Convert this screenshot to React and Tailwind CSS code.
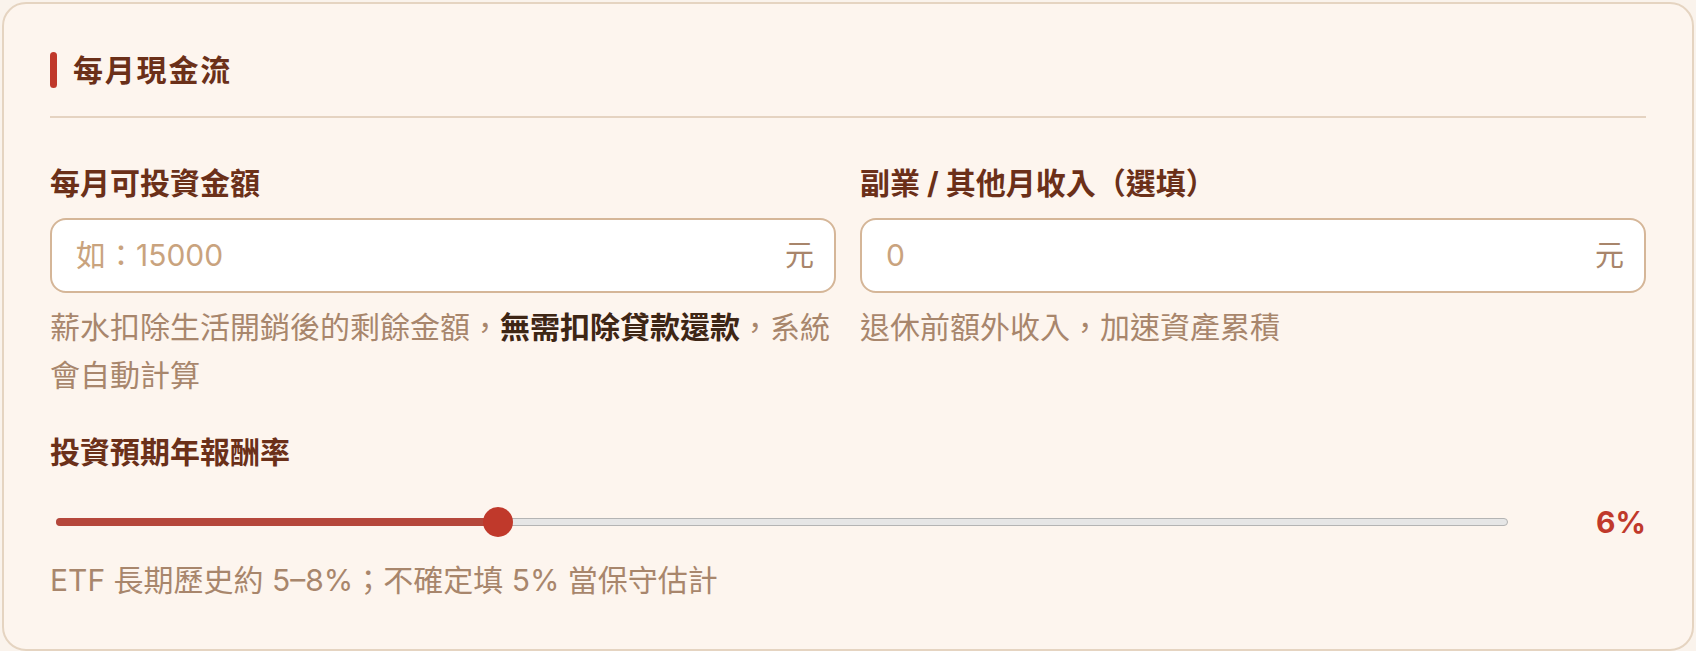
import React from "react";

const FONT = { fontFamily: '"Inter", "Noto Sans CJK TC", "Noto Sans", sans-serif' };

function Field({ label, placeholder, children }) {
  return (
    <div className="flex flex-col">
      <label className="text-[30px] font-bold leading-[40px] text-[#6b3019] mb-[15px]">{label}</label>
      <div className="h-[75px] rounded-[16px] border-2 border-[#d5b698] bg-white flex items-center pl-[24px] pr-[20px]">
        <input
          type="text"
          placeholder={placeholder}
          className="flex-1 min-w-0 bg-transparent outline-none text-[30px] text-[#3e2615] placeholder:text-[#c9a37e]"
        />
        <span className="text-[29px] text-[#a8856b]">元</span>
      </div>
      <p className="mt-[10px] text-[30px] leading-[48px] text-[#a8866c]">{children}</p>
    </div>
  );
}

export default function App() {
  return (
    <div className="bg-[#faf3ec] px-[2px] pt-[2px]" style={FONT}>
      <div className="rounded-[24px] border-2 border-[#e5d4c1] bg-[#fdf5ee] px-[46px] pt-[48px] pb-[45px]">
        <div className="flex items-center gap-[16px] pb-[28px] border-b-2 border-[#e5d3c1]">
          <span className="block w-[7px] h-[36px] rounded-full bg-[#c0392b]" />
          <h2 className="text-[30px] font-bold leading-[36px] tracking-[0.06em] text-[#6b3019]">每月現金流</h2>
        </div>

        <div className="mt-[45px] grid grid-cols-2 gap-x-[24px]">
          <Field label="每月可投資金額" placeholder="如：15000">
            薪水扣除生活開銷後的剩餘金額，<strong className="font-bold text-[#3e2615]">無需扣除貸款還款</strong>，系統會自動計算
          </Field>
          <Field label="副業 / 其他月收入（選填）" placeholder="0">
            退休前額外收入，加速資產累積
          </Field>
        </div>

        <div className="mt-[33px]">
          <div className="text-[30px] font-bold leading-[40px] text-[#6b3019]">投資預期年報酬率</div>
          <div className="mt-[30px] h-[40px] flex items-center">
            <div className="relative flex-1 ml-[6px] h-[8px]">
              <div className="absolute inset-0 rounded-full bg-[#e6e6e6] border border-[#b4b4b4]" />
              <div className="absolute left-0 top-0 h-[8px] w-[30.46%] rounded-full bg-[#b5473b]" />
              <div className="absolute top-1/2 left-[calc(30.46%-15px)] -translate-y-1/2 w-[30px] h-[30px] rounded-full bg-[#c0392b]" />
            </div>
            <span className="w-[138px] text-right text-[30px] font-bold leading-[40px] text-[#c0392b]">6%</span>
          </div>
          <p className="mt-[14px] text-[30px] leading-[48px] text-[#a8866c]">
            ETF 長期歷史約 5–8%；不確定填 5% 當保守估計
          </p>
        </div>
      </div>
    </div>
  );
}
